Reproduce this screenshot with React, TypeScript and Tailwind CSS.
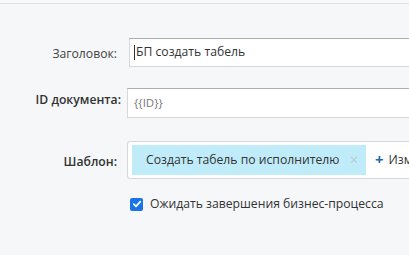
export default function App() {
  return (
    <div
      className="w-[409px] h-[255px] overflow-hidden bg-[#f5f7f9] text-[12.2px] text-[#333]"
      style={{ fontFamily: '"Open Sans", "Noto Sans", sans-serif' }}
    >
      <div className="h-[4px] bg-[#f7f9fa] border-b border-[#dfe3e6]" />

      <div className="flex flex-col pt-[34px]">
        {/* Заголовок */}
        <div className="flex items-center">
          <div className="w-[117px] shrink-0 text-right text-[#444] mt-[4px]">Заголовок:</div>
          <div className="ml-[12px] flex-1 h-[29px] bg-white border border-[#d5d9dd] border-t-[#a9aeb3] border-r-0 flex items-center pl-[4px]">
            <span className="w-px h-[15px] bg-[#333] mr-[1px]" />
            <span className="text-[#333]">БП создать табель</span>
          </div>
        </div>

        {/* ID документа */}
        <div className="flex items-center mt-[21px]">
          <div className="w-[121px] shrink-0 text-right font-semibold text-[#333] mb-[6px]">ID документа:</div>
          <div className="ml-[6px] flex-1 h-[30px] bg-white border border-[#d5d9dd] border-t-[#a9aeb3] border-r-0 flex items-center pl-[6px]">
            <span className="text-[#777] text-[11.5px]">{'{{ID}}'}</span>
          </div>
        </div>

        {/* Шаблон */}
        <div className="flex items-center mt-[23px]">
          <div className="w-[117px] shrink-0 text-right font-semibold text-[#333] mt-[4px]">Шаблон:</div>
          <div className="ml-[10px] flex-1 h-[38px] bg-white border border-[#d5d9dd] border-r-0 rounded-l-[3px] flex items-center pl-[4px] gap-[9px] overflow-hidden">
            <div className="h-[30px] w-[234px] shrink-0 bg-[#c0ecfa] flex items-center pl-[14px] pr-[8px] justify-between">
              <span className="text-[#333] whitespace-nowrap">Создать табель по исполнителю</span>
              <span className="text-[#b5cdd6] text-[14px] leading-none">×</span>
            </div>
            <div className="flex items-center gap-[5px] whitespace-nowrap">
              <span className="text-[#2067b0] font-bold text-[15px] leading-none">+</span>
              <span className="text-[#333]">Изменить</span>
            </div>
          </div>
        </div>

        {/* Checkbox */}
        <div className="flex items-center mt-[16px] pl-[130px]">
          <div className="w-[13px] h-[13px] rounded-[2px] bg-[#1a73e8] flex items-center justify-center">
            <svg width="10" height="10" viewBox="0 0 10 10" fill="none">
              <path d="M1.8 5.2 L4 7.3 L8.3 2.7" stroke="white" strokeWidth="1.7" strokeLinecap="round" strokeLinejoin="round" />
            </svg>
          </div>
          <span className="ml-[7px] text-[#333]">Ожидать завершения бизнес-процесса</span>
        </div>
      </div>
    </div>
  );
}
